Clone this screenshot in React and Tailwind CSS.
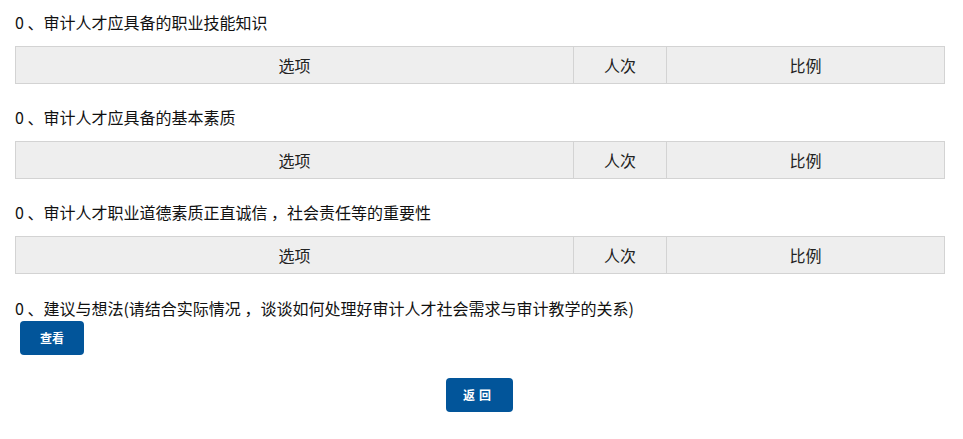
import React from "react";

function Section({ title }) {
  return (
    <div>
      <div className="h-5 leading-5 text-[16px] text-[#111]">{title}</div>
      <div className="mt-[14px] flex h-[38px] w-[930px] border border-[#d3d3d3] bg-[#eeeeee] text-[16px] text-[#222]">
        <div className="flex w-[558px] items-center justify-center border-r border-[#d3d3d3]">选项</div>
        <div className="flex w-[93px] items-center justify-center border-r border-[#d3d3d3]">人次</div>
        <div className="flex flex-1 items-center justify-center">比例</div>
      </div>
    </div>
  );
}

export default function App() {
  return (
    <div
      className="w-[963px] h-[439px] bg-white pl-[15px] pt-[12px]"
      style={{ fontFamily: '"Noto Sans CJK SC", "Noto Sans", sans-serif' }}
    >
      <div className="flex flex-col gap-[23px]">
        <Section title="0 、审计人才应具备的职业技能知识" />
        <Section title="0 、审计人才应具备的基本素质" />
        <Section title="0 、审计人才职业道德素质正直诚信 ，社会责任等的重要性" />
      </div>
      <div className="mt-[24px] h-5 leading-5 text-[16px] text-[#111]">
        0 、建议与想法(请结合实际情况 ，谈谈如何处理好审计人才社会需求与审计教学的关系)
      </div>
      <button className="ml-[5px] mt-[3px] flex h-[34px] w-[64px] items-center justify-center rounded-[4px] bg-[#02559a] text-[12px] font-bold text-white">
        查看
      </button>
      <div className="mt-[23px] flex w-[930px] justify-center">
        <button className="ml-[-2px] flex h-[34px] w-[67px] items-center justify-center rounded-[4px] bg-[#02559a] text-[12px] font-bold tracking-[4px] text-white">
          返回
        </button>
      </div>
    </div>
  );
}
